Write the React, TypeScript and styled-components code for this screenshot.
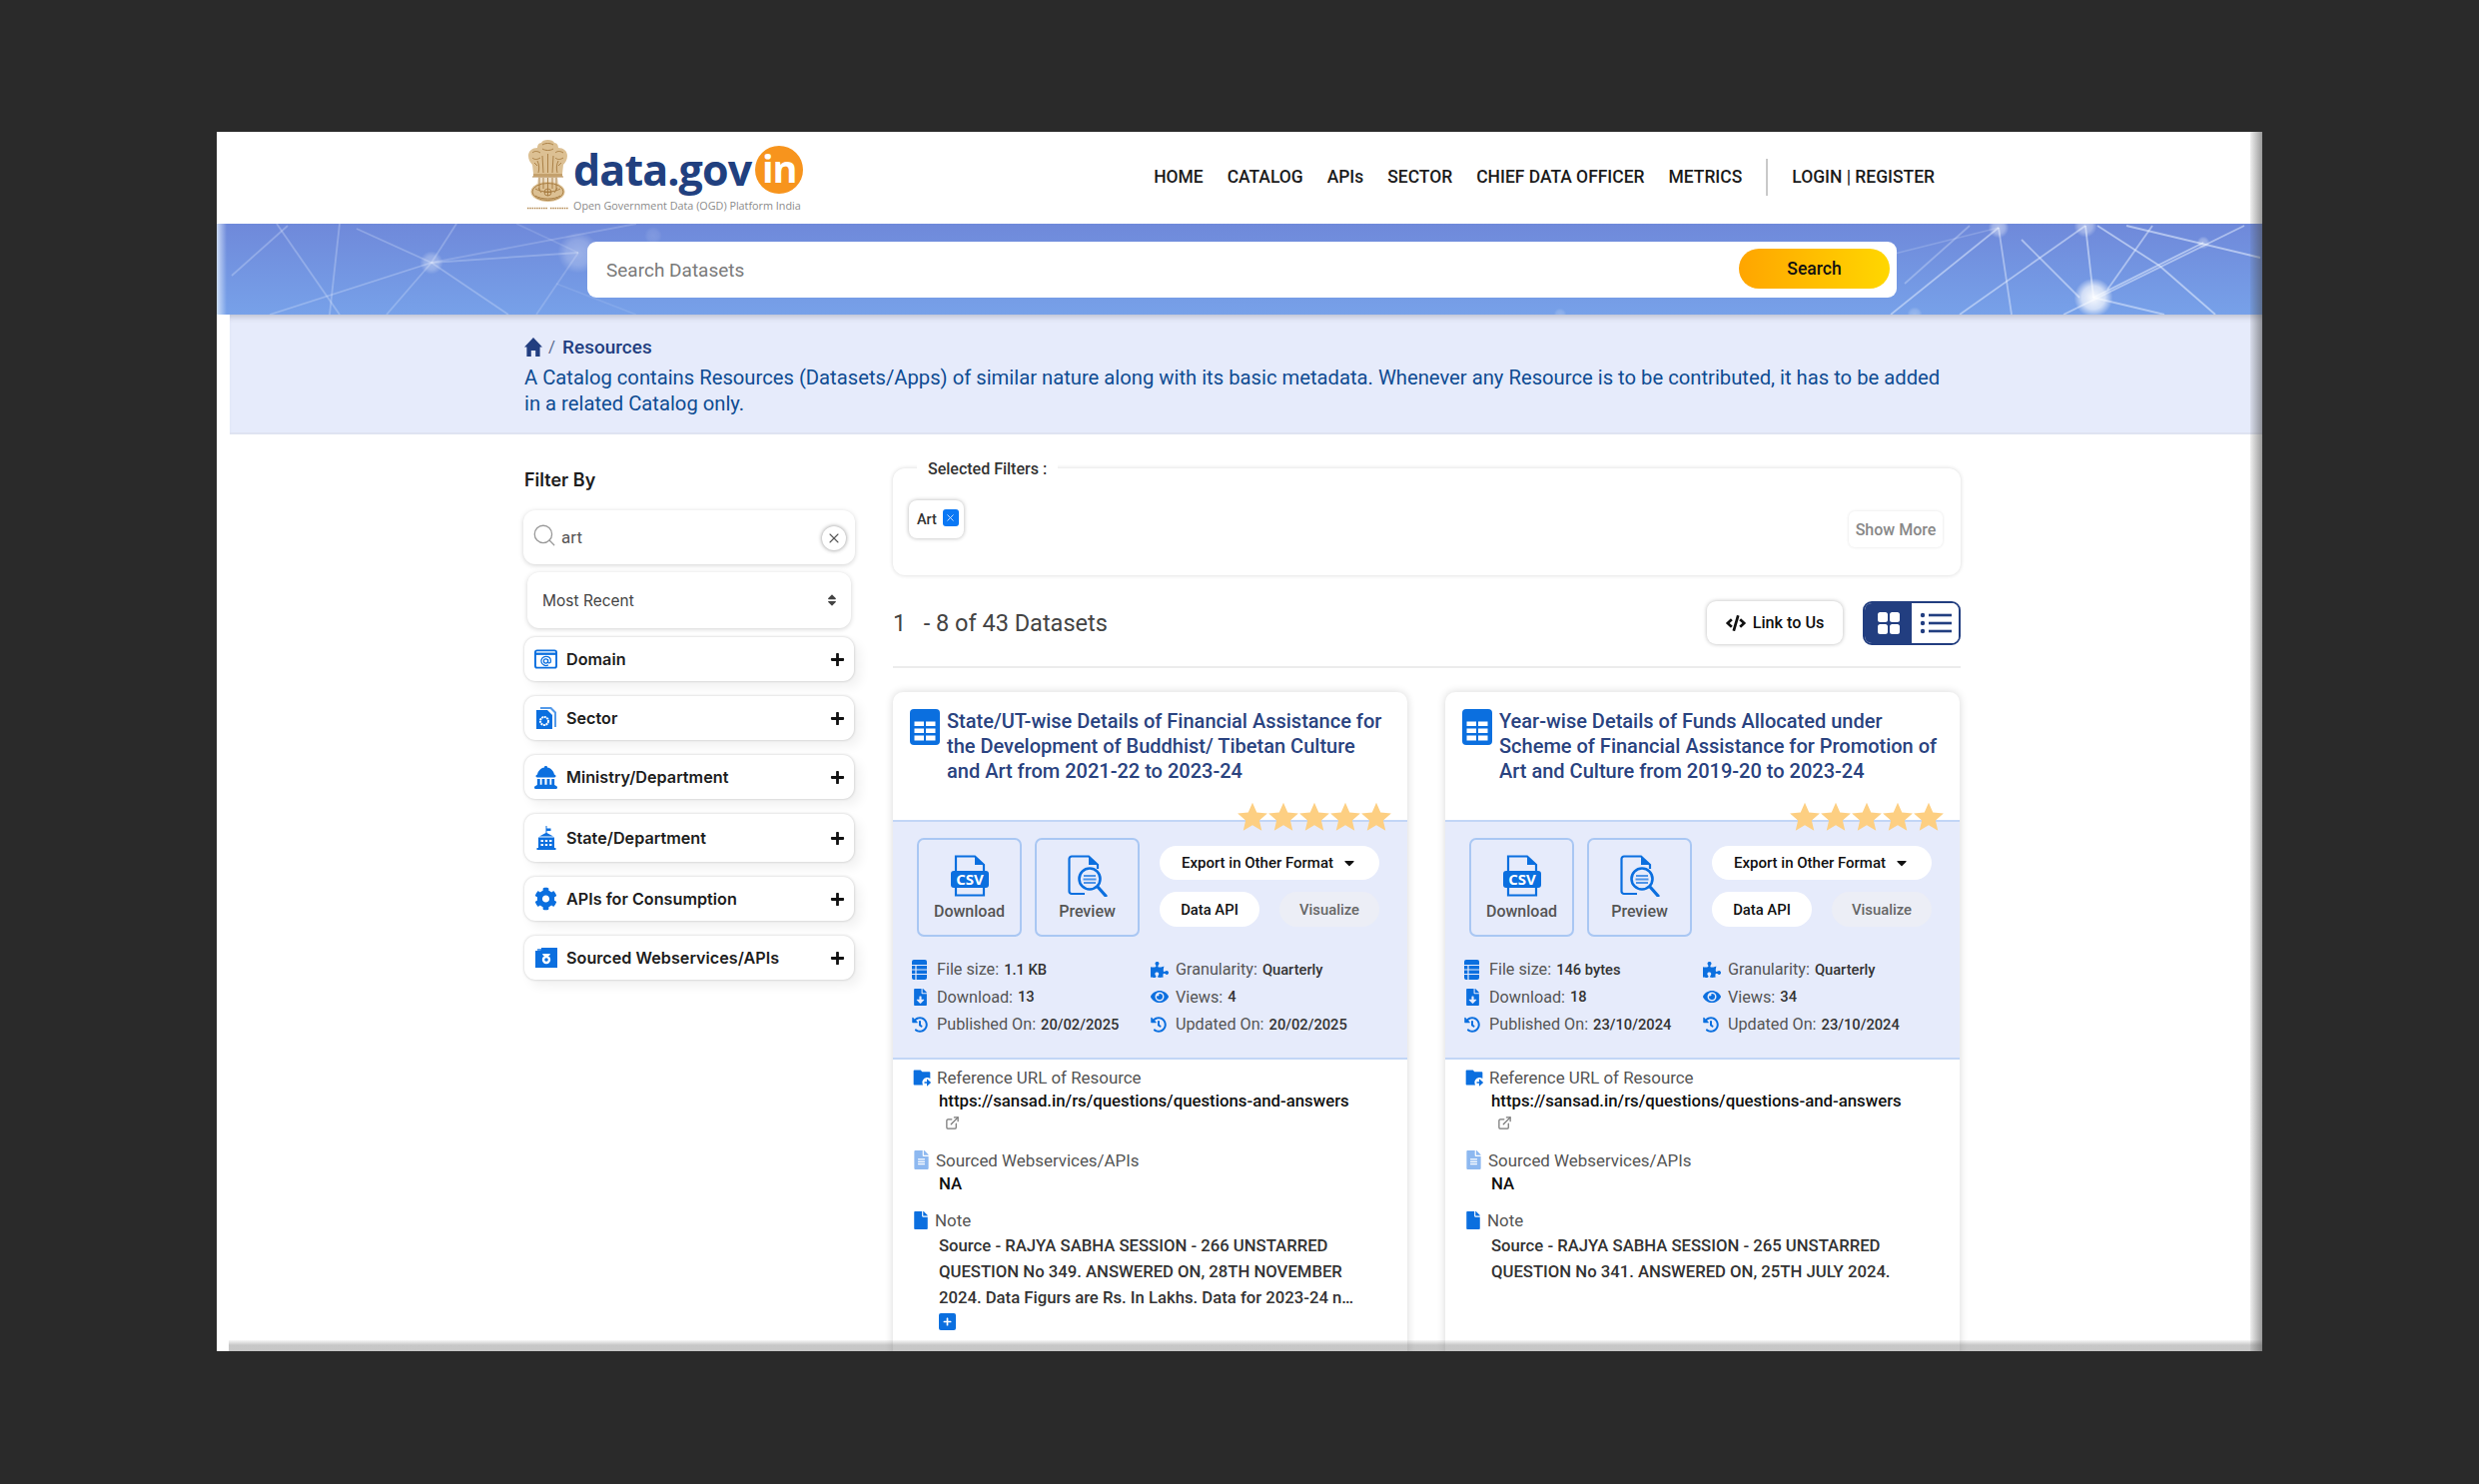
import React from 'react';
import styled, { createGlobalStyle } from 'styled-components';
import { FaCaretDown, FaPuzzlePiece, FaEye, FaHistory, FaFile, FaFileAlt, FaPlus, FaCode, FaSort, FaCog, FaFileDownload } from 'react-icons/fa';
import { FaLandmarkDome } from 'react-icons/fa6';
import { RiFolderSharedFill } from 'react-icons/ri';
import { Search, X, ExternalLink } from 'lucide-react';

const BLUE = '#0b6fdf';
const NAVY = '#223e80';

const GlobalStyle = createGlobalStyle`
  html, body { margin: 0; padding: 0; background: #2a2a2a; }
  * { box-sizing: border-box; }
`;

const Page = styled.div`
  width: 2482px;
  height: 1486px;
  padding: 132px 217px 133px;
  background: #2a2a2a;
  font-family: Roboto, 'Liberation Sans', sans-serif;
  overflow: hidden;
`;

const Screen = styled.div`
  position: relative;
  width: 2048px;
  height: 1221px;
  background: #fff;
  overflow: hidden;
  &::before {
    content: '';
    position: absolute;
    top: 0;
    right: 0;
    bottom: 0;
    width: 12px;
    background: linear-gradient(90deg, rgba(90, 90, 90, 0.1), rgba(70, 70, 70, 0.55));
    z-index: 5;
  }
  &::after {
    content: '';
    position: absolute;
    left: 12px;
    right: 0;
    bottom: 0;
    height: 11px;
    background: linear-gradient(180deg, rgba(90, 90, 90, 0.05), rgba(80, 80, 80, 0.32) 45%);
    z-index: 5;
  }
`;

const Header = styled.header`
  height: 92px;
  padding: 6px 328px 0 308px;
  display: flex;
  align-items: flex-start;
  justify-content: space-between;
`;

const Logo = styled.div`
  display: flex;
  margin-left: 2px;
`;

const LogoText = styled.div`
  margin-left: 4px;
  padding-top: 3px;
  display: flex;
  flex-direction: column;
`;

const LogoMain = styled.div`
  display: flex;
  align-items: center;
  height: 58px;
`;

const LogoWord = styled.span`
  font-family: 'Open Sans', sans-serif;
  font-weight: 700;
  font-size: 43px;
  letter-spacing: -0.9px;
  line-height: 50px;
  color: #21407f;
`;

const LogoBadge = styled.span`
  width: 48px;
  height: 48px;
  margin-left: 4px;
  border-radius: 50%;
  background: #f7941d;
  color: #fff;
  font-family: 'Open Sans', sans-serif;
  font-weight: 700;
  font-size: 38px;
  line-height: 44px;
  text-align: center;
  letter-spacing: -1px;
`;

const LogoSub = styled.span`
  font-family: 'Open Sans', sans-serif;
  font-size: 10.8px;
  color: #8b8b8b;
  line-height: 14px;
  white-space: nowrap;
`;

const Nav = styled.nav`
  height: 78px;
  display: flex;
  align-items: center;
  gap: 24px;
  font-size: 17.45px;
  font-weight: 500;
  color: #1b1b1b;
`;

const NavLink = styled.span`
  white-space: nowrap;
`;

const NavDivider = styled.span`
  width: 2px;
  height: 37px;
  background: #c9c9c9;
`;

const Banner = styled.div`
  position: relative;
  height: 91px;
  padding-left: 371px;
  display: flex;
  align-items: center;
  background: linear-gradient(90deg, rgba(235, 245, 255, 0.75), rgba(255, 255, 255, 0) 10px),
    linear-gradient(180deg, #6f89da, #77a1e9);
  overflow: hidden;
`;

const BannerArt = styled.svg`
  position: absolute;
  inset: 0;
  filter: blur(0.6px);
`;

const SearchBar = styled.div`
  position: relative;
  width: 1311px;
  height: 56px;
  padding: 2px 7px 0 19px;
  border-radius: 9px;
  background: #fff;
  display: flex;
  align-items: center;
  justify-content: space-between;
  color: #7a7a7a;
  font-size: 19px;
`;

const SearchButton = styled.span`
  width: 151px;
  height: 40px;
  margin-top: -4px;
  border-radius: 20px;
  background: linear-gradient(90deg, #ffa500, #ffd700);
  color: #111;
  font-size: 17.5px;
  font-weight: 500;
  line-height: 40px;
  text-align: center;
`;

const Intro = styled.section`
  margin-left: 13px;
  height: 120px;
  padding: 20px 0 0 295px;
  background: #e6ebfb;
  border-bottom: 2px solid #dfe3f1;
  box-shadow: inset 0 7px 6px -5px rgba(60, 60, 80, 0.28);
`;

const Crumb = styled.div`
  height: 24px;
  display: flex;
  align-items: center;
  color: ${NAVY};
  font-size: 19px;
  font-weight: 500;
`;

const CrumbSep = styled.span`
  margin: 0 7px 0 6px;
  font-weight: 400;
  font-size: 17px;
  color: #5a6a90;
`;

const IntroText = styled.p`
  margin: 6px 0 0;
  width: 1428px;
  font-size: 20.23px;
  line-height: 26px;
  color: #0f4c92;
`;

const Body = styled.div`
  display: flex;
  gap: 38px;
  padding: 34px 0 0 307px;
`;

const Sidebar = styled.aside`
  width: 332px;
  flex: none;
`;

const SideTitle = styled.h3`
  margin: 0 0 18px 1px;
  font-family: Inter, sans-serif;
  font-size: 18px;
  font-weight: 600;
  line-height: 24px;
  color: #1c1c1c;
`;

const SearchField = styled.div`
  height: 54px;
  padding: 0 9px 0 8px;
  border-radius: 12px;
  background: #fff;
  box-shadow: 0 1px 5px rgba(0, 0, 0, 0.18);
  display: flex;
  align-items: center;
  gap: 4px;
  font-size: 17px;
  color: #555;
`;

const SearchGlyph = styled(Search)`
  margin-top: -4px;
`;

const ClearButton = styled.span`
  margin: 2px 0 0 auto;
  width: 24px;
  height: 24px;
  border-radius: 50%;
  background: #fff;
  box-shadow: 0 0 4px rgba(0, 0, 0, 0.45);
  display: flex;
  align-items: center;
  justify-content: center;
  color: #555;
`;

const SortSelect = styled.div`
  width: 324px;
  height: 56px;
  margin: 8px 0 9px 4px;
  padding: 0 12px 0 15px;
  border-radius: 12px;
  background: #fff;
  box-shadow: 0 1px 5px rgba(0, 0, 0, 0.18);
  display: flex;
  align-items: center;
  justify-content: space-between;
  font-family: Inter, sans-serif;
  font-size: 15.5px;
  color: #444;
`;

const Accordion = styled.div`
  display: flex;
  flex-direction: column;
  gap: 15px;
`;

const AccordionRow = styled.div<{ $tall?: boolean }>`
  width: 330px;
  margin-left: 1px;
  height: ${({ $tall }) => ($tall ? 48 : 44)}px;
  padding: 0 9px 0 10px;
  border-radius: 11px;
  background: #fff;
  box-shadow: 0 0 3px rgba(0, 0, 0, 0.22), 6px 6px 12px rgba(0, 0, 0, 0.06);
  display: flex;
  align-items: center;
  font-family: Inter, sans-serif;
  font-size: 16.2px;
  font-weight: 600;
  color: #1d1d1d;
`;

const RowIcon = styled.span`
  width: 23px;
  height: 24px;
  margin-right: 9px;
  display: flex;
  align-items: center;
  justify-content: center;
  color: ${BLUE};
`;

const RowPlus = styled(FaPlus)`
  margin-left: auto;
  color: #111;
`;

const Main = styled.main`
  width: 1069px;
  flex: none;
`;

const FilterBox = styled.div`
  position: relative;
  height: 107px;
  border-radius: 12px;
  background: #fff;
  box-shadow: 0 0 4px rgba(0, 0, 0, 0.16);
  display: flex;
  align-items: flex-start;
  justify-content: space-between;
  padding: 32px 18px 0 16px;
`;

const FilterLegend = styled.span`
  position: absolute;
  top: -9px;
  left: 24px;
  padding: 0 11px;
  background: #fff;
  font-size: 16px;
  font-weight: 500;
  color: #333;
`;

const Chip = styled.span`
  width: 55px;
  height: 38px;
  padding-left: 8px;
  border-radius: 8px;
  background: #fff;
  box-shadow: 0 0 4px rgba(0, 0, 0, 0.3);
  display: flex;
  align-items: center;
  gap: 6px;
  font-size: 14.5px;
  font-weight: 500;
  color: #333;
`;

const ChipClose = styled.span`
  width: 16px;
  height: 17px;
  margin-top: -3px;
  border-radius: 3px;
  background: #0a78f5;
  color: #d6e8ff;
  display: flex;
  align-items: center;
  justify-content: center;
`;

const ShowMore = styled.span`
  width: 94px;
  height: 36px;
  margin-top: 11px;
  border-radius: 6px;
  box-shadow: 0 0 3px rgba(0, 0, 0, 0.12);
  font-size: 16px;
  font-weight: 500;
  line-height: 37px;
  text-align: center;
  color: #888;
`;

const ResultRow = styled.div`
  height: 93px;
  padding: 26px 0 0;
  border-bottom: 2px solid #ececec;
  display: flex;
  align-items: flex-start;
`;

const ResultCount = styled.span`
  margin-top: 8px;
  font-size: 23.5px;
  color: #444;
  white-space: pre;
`;

const LinkButton = styled.span`
  margin-left: auto;
  width: 136px;
  height: 43px;
  border-radius: 9px;
  background: #fff;
  box-shadow: 0 0 4px rgba(0, 0, 0, 0.28);
  display: flex;
  align-items: center;
  justify-content: center;
  gap: 7px;
  font-size: 16.2px;
  font-weight: 500;
  color: #111;
`;

const ViewToggle = styled.div`
  width: 98px;
  height: 44px;
  margin-left: 20px;
  border: 2px solid ${NAVY};
  border-radius: 9px;
  overflow: hidden;
  display: flex;
`;

const ViewOption = styled.span<{ $active?: boolean }>`
  flex: 1;
  display: flex;
  align-items: center;
  justify-content: center;
  background: ${({ $active }) => ($active ? NAVY : '#fff')};
`;

const CardGrid = styled.div`
  display: grid;
  grid-template-columns: 515px 515px;
  column-gap: 38px;
  margin-top: 24px;
`;

const Card = styled.article`
  position: relative;
  min-height: 720px;
  border-radius: 10px 10px 0 0;
  background: #fff;
  box-shadow: 0 0 9px rgba(0, 0, 0, 0.16);
`;

const CardHead = styled.div`
  height: 128px;
  padding: 17px 17px 0 17px;
  display: flex;
  gap: 7px;
`;

const TitleIcon = styled.span`
  flex: none;
  width: 30px;
  height: 36px;
`;

const CardTitle = styled.h4`
  margin: 0;
  font-size: 20px;
  font-weight: 500;
  line-height: 25px;
  color: #2a437f;
`;

const Stars = styled.div`
  position: absolute;
  top: 110px;
  right: 16px;
  display: flex;
  gap: 1px;
`;

const CardBand = styled.div`
  padding: 16px 0 19px 19px;
  background: #e6ebfb;
  border-top: 2px solid #c2d6f6;
  border-bottom: 2px solid #c2d6f6;
`;

const ActionRow = styled.div`
  display: flex;
  margin-left: 5px;
`;

const ActionBox = styled.div`
  width: 105px;
  height: 99px;
  margin-right: 13px;
  padding-top: 15px;
  border: 2px solid #a9c7f3;
  border-radius: 7px;
  display: flex;
  flex-direction: column;
  align-items: center;
  font-size: 16px;
  font-weight: 500;
  color: #555;
`;

const ActionLabel = styled.span`
  margin-top: 5px;
`;

const PillColumn = styled.div`
  margin: 8px 0 0 7px;
  width: 220px;
  display: flex;
  flex-direction: column;
  gap: 12px;
`;

const PillRow = styled.div`
  display: flex;
  justify-content: space-between;
`;

const Pill = styled.span<{ $muted?: boolean; $wide?: boolean }>`
  width: ${({ $wide }) => ($wide ? '220px' : '100px')};
  height: ${({ $wide }) => ($wide ? 34 : 35)}px;
  border-radius: 18px;
  background: ${({ $muted }) => ($muted ? '#eceef6' : '#fff')};
  color: ${({ $muted }) => ($muted ? '#666' : '#111')};
  display: flex;
  align-items: center;
  justify-content: center;
  gap: 8px;
  font-size: ${({ $wide }) => ($wide ? 15 : 14.8)}px;
  font-weight: 500;
`;

const MetaGrid = styled.div`
  display: grid;
  grid-template-columns: 239px 1fr;
  margin-top: 19px;
`;

const MetaItem = styled.div`
  height: 27.5px;
  display: flex;
  align-items: center;
  font-size: 16.2px;
  color: #555;
  white-space: nowrap;
`;

const MetaIcon = styled.span`
  width: 25px;
  display: flex;
  justify-content: flex-start;
  color: ${BLUE};
`;

const MetaValue = styled.b`
  margin-left: 5px;
  font-size: 14.7px;
  font-weight: 500;
  color: #333;
`;

const CardInfo = styled.div`
  padding: 7px 14px 0 19px;
`;

const InfoLabel = styled.div<{ $gap: number }>`
  height: 22px;
  margin-top: ${({ $gap }) => $gap}px;
  display: flex;
  align-items: center;
  gap: 5px;
  font-size: 16.9px;
  color: #555;
`;

const InfoValue = styled.div`
  height: 24px;
  margin-left: 27px;
  line-height: 24px;
  font-size: 16.8px;
  font-weight: 500;
  color: #111;
  white-space: nowrap;
`;

const NoteLines = styled.div`
  margin: 2px 0 0 27px;
  font-size: 16.7px;
  font-weight: 500;
  line-height: 26px;
  color: #333;
  white-space: nowrap;
`;

const ExpandButton = styled.span`
  margin: 2px 0 0 27px;
  width: 17px;
  height: 17px;
  border-radius: 2px;
  background: ${BLUE};
  color: #fff;
  display: flex;
  align-items: center;
  justify-content: center;
`;

const NetworkLines: [number, number, number, number, number][] = [
  [123, 0, 113, 91, 0.28], [60, 0, 123, 91, 0.28], [15, 52, 71, 2, 0.28], [53, 91, 215, 39, 0.28], [140, 5, 215, 39, 0.25],
  [215, 39, 292, 91, 0.28], [215, 39, 362, 29, 0.25], [215, 39, 420, 0, 0.2], [320, 91, 362, 29, 0.2], [215, 39, 170, 91, 0.25],
  [240, 0, 215, 39, 0.25], [362, 29, 300, 0, 0.15], [420, 91, 340, 60, 0.12],
  [1676, 91, 1784, 4, 0.5], [1784, 4, 1797, 91, 0.45], [1745, 91, 1871, 2, 0.5], [1755, 2, 1690, 60, 0.3], [1807, 16, 1865, 74, 0.5],
  [1871, 2, 1879, 74, 0.55], [1879, 74, 1989, 19, 0.55], [1879, 74, 1950, 91, 0.5], [1883, 2, 1945, 42, 0.55], [1945, 42, 2001, 91, 0.55],
  [1912, 2, 2046, 34, 0.55], [1938, 2, 1893, 66, 0.5], [2030, 2, 1849, 91, 0.5], [1680, 30, 1784, 4, 0.2],
];

const NetworkNodes: [number, number, number, number][] = [
  [215, 39, 9, 0.35], [362, 29, 16, 0.3], [1879, 74, 15, 0.95], [1784, 4, 8, 0.45], [1871, 2, 9, 0.45], [1989, 19, 5, 0.35],
  [437, 12, 7, 0.12], [1700, 91, 6, 0.25], [1345, 91, 5, 0.2],
];

const BannerNetwork = () => (
  <BannerArt width="2048" height="91" viewBox="0 0 2048 91">
    <defs>
      <radialGradient id="glow">
        <stop offset="0%" stopColor="#fff" stopOpacity="1" />
        <stop offset="60%" stopColor="#fff" stopOpacity="0.7" />
        <stop offset="100%" stopColor="#fff" stopOpacity="0" />
      </radialGradient>
    </defs>
    <g stroke="#eaf2ff" strokeWidth="1.8">
      {NetworkLines.map(([x1, y1, x2, y2, o], i) => (
        <line key={i} x1={x1} y1={y1} x2={x2} y2={y2} strokeOpacity={o} />
      ))}
    </g>
    {NetworkNodes.map(([cx, cy, r, o], i) => (
      <circle key={i} cx={cx} cy={cy} r={r * 1.3} fill="url(#glow)" opacity={o} />
    ))}
  </BannerArt>
);

const Emblem = () => (
  <svg width="43" height="75" viewBox="0 0 43 75">
    <g fill="#dcc093">
      <path d="M15 5c1-4 12-4 13 0 3 0 4 3 4 5 5 0 9 3 9 8 0 4-2 7-4 9l-1 9H7l-1-9c-2-2-4-5-4-9 0-5 4-8 9-8 0-2 1-5 4-5z" />
      <rect x="7" y="36" width="29" height="3" />
      <path d="M12 39h19l4 20H8z" opacity="0.5" />
      <ellipse cx="21.500" cy="54" rx="17" ry="10" />
    </g>
    <g fill="none" stroke="#a67a40" strokeWidth="0.9">
      <path d="M16 7c3-2 8-2 11 0M16 11c3 2 8 2 11 0M6 15c2-2 5-2 8 0M29 15c2-2 5-2 8 0M6 20c2 2 5 2 8 0M29 20c2 2 5 2 8 0" />
      <path d="M11 23c2 4 2 8 1 12M32 23c-2 4-2 8-1 12M21.500 16v19M16 18l1 17M27 18l-1 17M8 25l3 3M35 25l-3 3" />
      <path d="M13 40v12M17 40v11M21.500 40v11M26 40v11M30 40v12" />
      <path d="M7 37h29M6 39h31" />
      <ellipse cx="21.500" cy="54" rx="15.500" ry="8.500" />
      <path d="M9 51c6 4 19 4 25 0M9 58c6 4 19 4 25 0" />
      <circle cx="21.500" cy="54.500" r="3.500" />
      <path d="M21.500 51v7M18 54.500h7M12 50l3 5M31 50l-3 5" />
    </g>
    <g stroke="#b58c55" strokeWidth="1.6" strokeDasharray="1.500 0.800">
      <line x1="1" y1="70.500" x2="21" y2="70.500" />
      <line x1="24" y1="70.500" x2="42" y2="70.500" />
    </g>
  </svg>
);

const HomeIcon = () => (
  <svg width="18" height="19" viewBox="0 0 18 19" fill={NAVY}>
    <path d="M9 0l9 9.500h-2.400V19h-4.400v-6H6.800v6H2.400V9.500H0z" />
  </svg>
);

const TableIcon = () => (
  <svg width="30" height="36" viewBox="0 0 30 36">
    <rect width="30" height="36" rx="4" fill={BLUE} />
    <g fill="#fff">
      <rect x="4.500" y="12.500" width="9.500" height="4.500" />
      <rect x="16" y="12.500" width="9.500" height="4.500" />
      <rect x="4.500" y="19.500" width="9.500" height="4.500" />
      <rect x="16" y="19.500" width="9.500" height="4.500" />
      <rect x="4.500" y="26.500" width="9.500" height="5" />
      <rect x="16" y="26.500" width="9.500" height="5" />
    </g>
  </svg>
);

const SizeIcon = () => (
  <svg width="15" height="20" viewBox="0 0 15 20">
    <path d="M2 0h11a2 2 0 0 1 2 2v16a2 2 0 0 1-2 2H2a2 2 0 0 1-2-2V2a2 2 0 0 1 2-2z" fill={BLUE} />
    <path d="M0 5.500h15M0 10h15M0 14.500h15M4 5.500V20" stroke="#e6ebfb" strokeWidth="1.200" />
  </svg>
);

const DomainIcon = () => (
  <svg width="24" height="20" viewBox="0 0 24 20" fill="none" stroke={BLUE}>
    <rect x="1" y="1" width="22" height="18" rx="2" strokeWidth="2" />
    <path d="M1 4.500h22" strokeWidth="2.400" />
    <circle cx="12" cy="12" r="2.200" strokeWidth="1.300" />
    <path d="M14.200 10v3c0 1.600 3 1.600 3-1 0-3-2.300-4.800-5.200-4.800a4.800 4.800 0 1 0 2.500 8.900" strokeWidth="1.300" />
  </svg>
);

const SectorIcon = () => (
  <svg width="21" height="22" viewBox="0 0 21 22">
    <path d="M5 0h11l5 5v15h-2V6l-4-4H5z" fill={BLUE} opacity="0.7" />
    <path d="M1 3h11l5 5v14H1z" fill={BLUE} />
    <circle cx="9" cy="14" r="4" fill="none" stroke="#fff" strokeWidth="2" strokeDasharray="2 0.6" />
  </svg>
);

const StateIcon = () => (
  <svg width="20" height="24" viewBox="0 0 20 24" fill={BLUE}>
    <path d="M9.500 0h1v2.500h4v2.500h-4V7L17 10.500H3L9.500 7z" />
    <path d="M2 11.500h16V22h1.500v2H.5v-2H2zM4.500 14v2h2.500v-2zm4.300 0v2h2.400v-2zm4.200 0v2h2.500v-2zM4.500 18v2h2.500v-2zm4.300 0v2h2.400v-2zm4.200 0v2h2.500v-2z" fillRule="evenodd" />
  </svg>
);

const SourcedIcon = () => (
  <svg width="22" height="20" viewBox="0 0 22 20">
    <path d="M0 3h5l1-1v-2h16v20H0z" fill={BLUE} />
    <path d="M2 1h7v2H2z" fill={BLUE} opacity="0.7" />
    <circle cx="11" cy="12" r="4.200" fill="#fff" />
    <circle cx="11" cy="12" r="1.800" fill={BLUE} />
    <path d="M7 6h8l-1 2H8z" fill="#fff" />
  </svg>
);

const GridIcon = () => (
  <svg width="24" height="24" viewBox="0 0 24 24" fill="#fff">
    <rect x="1" y="1" width="10" height="10" rx="2.500" />
    <rect x="13" y="1" width="10" height="10" rx="2.500" />
    <rect x="1" y="13" width="10" height="10" rx="2.500" />
    <rect x="13" y="13" width="10" height="10" rx="2.500" />
  </svg>
);

const ListIcon = () => (
  <svg width="32" height="24" viewBox="0 0 32 24" fill={NAVY}>
    <circle cx="3" cy="4" r="2.200" />
    <circle cx="3" cy="12" r="2.200" />
    <circle cx="3" cy="20" r="2.200" />
    <rect x="9" y="2.700" width="23" height="2.600" />
    <rect x="9" y="10.700" width="23" height="2.600" />
    <rect x="9" y="18.700" width="23" height="2.600" />
  </svg>
);

const CsvIcon = () => (
  <svg width="38" height="42" viewBox="0 0 38 42">
    <path d="M5 17V1.500h19L33 10v7M33 32v8.500H5V32" fill="none" stroke={BLUE} strokeWidth="2.200" />
    <path d="M24 1.500V10h9z" fill={BLUE} />
    <rect x="0" y="16" width="38" height="17" rx="3" fill={BLUE} />
    <text x="19" y="30" textAnchor="middle" fontFamily="'Open Sans', sans-serif" fontWeight="700" fontSize="15" fill="#fff">CSV</text>
  </svg>
);

const PreviewIcon = () => (
  <svg width="40" height="42" viewBox="0 0 40 42" fill="none" stroke={BLUE}>
    <path d="M17 39H4a2.500 2.500 0 0 1-2.500-2.500V4A2.500 2.500 0 0 1 4 1.500h17L30 10v4" strokeWidth="2.200" />
    <path d="M21 1.500V10h9z" fill={BLUE} stroke="none" />
    <circle cx="22" cy="24" r="10.500" strokeWidth="2.600" />
    <path d="M30 32l8 9" strokeWidth="3.200" strokeLinecap="round" />
    <path d="M16 21h12M15.500 24.500h13M16 28h12" strokeWidth="1.800" opacity="0.7" />
  </svg>
);

const StarIcon = () => (
  <svg width="30" height="30" viewBox="0 0 24 24" fill="#fdcf82">
    <path d="M12 .5l3.400 7.800 8.500.8-6.400 5.600 1.900 8.300L12 18.600 4.600 23l1.900-8.300L.1 9.100l8.500-.8z" />
  </svg>
);

const filters = [
  { label: 'Domain', icon: <DomainIcon /> },
  { label: 'Sector', icon: <SectorIcon /> },
  { label: 'Ministry/Department', icon: <FaLandmarkDome size={23} /> },
  { label: 'State/Department', icon: <StateIcon />, tall: true },
  { label: 'APIs for Consumption', icon: <FaCog size={24} /> },
  { label: 'Sourced Webservices/APIs', icon: <SourcedIcon /> },
];

const datasets = [
  {
    title: 'State/UT-wise Details of Financial Assistance for the Development of Buddhist/ Tibetan Culture and Art from 2021-22 to 2023-24',
    size: '1.1 KB',
    downloads: '13',
    views: '4',
    published: '20/02/2025',
    updated: '20/02/2025',
    note: [
      'Source - RAJYA SABHA SESSION - 266 UNSTARRED',
      'QUESTION No 349. ANSWERED ON, 28TH NOVEMBER',
      '2024. Data Figurs are Rs. In Lakhs. Data for 2023-24 n…',
    ],
    more: true,
  },
  {
    title: 'Year-wise Details of Funds Allocated under Scheme of Financial Assistance for Promotion of Art and Culture from 2019-20 to 2023-24',
    size: '146 bytes',
    downloads: '18',
    views: '34',
    published: '23/10/2024',
    updated: '23/10/2024',
    note: [
      'Source - RAJYA SABHA SESSION - 265 UNSTARRED',
      'QUESTION No 341. ANSWERED ON, 25TH JULY 2024.',
    ],
    more: false,
  },
];

type Dataset = (typeof datasets)[number];

const DatasetCard: React.FC<{ data: Dataset }> = ({ data }) => (
  <Card>
    <CardHead>
      <TitleIcon>
        <TableIcon />
      </TitleIcon>
      <CardTitle>{data.title}</CardTitle>
    </CardHead>
    <Stars>
      {[0, 1, 2, 3, 4].map((i) => (
        <StarIcon key={i} />
      ))}
    </Stars>
    <CardBand>
      <ActionRow>
        <ActionBox>
          <CsvIcon />
          <ActionLabel>Download</ActionLabel>
        </ActionBox>
        <ActionBox>
          <PreviewIcon />
          <ActionLabel>Preview</ActionLabel>
        </ActionBox>
        <PillColumn>
          <Pill $wide>
            Export in Other Format <FaCaretDown size={16} />
          </Pill>
          <PillRow>
            <Pill>Data API</Pill>
            <Pill $muted>Visualize</Pill>
          </PillRow>
        </PillColumn>
      </ActionRow>
      <MetaGrid>
        <MetaItem>
          <MetaIcon><SizeIcon /></MetaIcon>File size: <MetaValue>{data.size}</MetaValue>
        </MetaItem>
        <MetaItem>
          <MetaIcon><FaPuzzlePiece size={18} /></MetaIcon>Granularity: <MetaValue>Quarterly</MetaValue>
        </MetaItem>
        <MetaItem>
          <MetaIcon><FaFileDownload size={17} /></MetaIcon>Download: <MetaValue>{data.downloads}</MetaValue>
        </MetaItem>
        <MetaItem>
          <MetaIcon><FaEye size={18} /></MetaIcon>Views: <MetaValue>{data.views}</MetaValue>
        </MetaItem>
        <MetaItem>
          <MetaIcon><FaHistory size={16} /></MetaIcon>Published On: <MetaValue>{data.published}</MetaValue>
        </MetaItem>
        <MetaItem>
          <MetaIcon><FaHistory size={16} /></MetaIcon>Updated On: <MetaValue>{data.updated}</MetaValue>
        </MetaItem>
      </MetaGrid>
    </CardBand>
    <CardInfo>
      <InfoLabel $gap={0}>
        <RiFolderSharedFill size={20} color={BLUE} />
        Reference URL of Resource
      </InfoLabel>
      <InfoValue>https://sansad.in/rs/questions/questions-and-answers</InfoValue>
      <InfoValue>
        <ExternalLink size={15} color="#777" style={{ marginLeft: 6 }} />
      </InfoValue>
      <InfoLabel $gap={13}>
        <FaFileAlt size={19} color="#8db8f0" />
        Sourced Webservices/APIs
      </InfoLabel>
      <InfoValue>NA</InfoValue>
      <InfoLabel $gap={14}>
        <FaFile size={18} color={BLUE} />
        Note
      </InfoLabel>
      <NoteLines>
        {data.note.map((line) => (
          <div key={line}>{line}</div>
        ))}
      </NoteLines>
      {data.more && (
        <ExpandButton>
          <FaPlus size={9} />
        </ExpandButton>
      )}
    </CardInfo>
  </Card>
);

const App: React.FC = () => (
  <Page>
    <GlobalStyle />
    <Screen>
      <Header>
        <Logo>
          <Emblem />
          <LogoText>
            <LogoMain>
              <LogoWord>data.gov</LogoWord>
              <LogoBadge>in</LogoBadge>
            </LogoMain>
            <LogoSub>Open Government Data (OGD) Platform India</LogoSub>
          </LogoText>
        </Logo>
        <Nav>
          <NavLink>HOME</NavLink>
          <NavLink>CATALOG</NavLink>
          <NavLink>APIs</NavLink>
          <NavLink>SECTOR</NavLink>
          <NavLink>CHIEF DATA OFFICER</NavLink>
          <NavLink>METRICS</NavLink>
          <NavDivider />
          <NavLink>LOGIN | REGISTER</NavLink>
        </Nav>
      </Header>
      <Banner>
        <BannerNetwork />
        <SearchBar>
          Search Datasets
          <SearchButton>Search</SearchButton>
        </SearchBar>
      </Banner>
      <Intro>
        <Crumb>
          <HomeIcon />
          <CrumbSep>/</CrumbSep>
          Resources
        </Crumb>
        <IntroText>
          A Catalog contains Resources (Datasets/Apps) of similar nature along with its basic metadata. Whenever any Resource is to be contributed, it has to be added in a related Catalog only.
        </IntroText>
      </Intro>
      <Body>
        <Sidebar>
          <SideTitle>Filter By</SideTitle>
          <SearchField>
            <SearchGlyph size={26} color="#999" strokeWidth={1.2} />
            art
            <ClearButton>
              <X size={16} strokeWidth={1.6} />
            </ClearButton>
          </SearchField>
          <SortSelect>
            Most Recent
            <FaSort size={14} color="#444" />
          </SortSelect>
          <Accordion>
            {filters.map((f) => (
              <AccordionRow key={f.label} $tall={f.tall}>
                <RowIcon>{f.icon}</RowIcon>
                {f.label}
                <RowPlus size={15} />
              </AccordionRow>
            ))}
          </Accordion>
        </Sidebar>
        <Main>
          <FilterBox>
            <FilterLegend>Selected Filters :</FilterLegend>
            <Chip>
              Art
              <ChipClose>
                <X size={11} strokeWidth={2} />
              </ChipClose>
            </Chip>
            <ShowMore>Show More</ShowMore>
          </FilterBox>
          <ResultRow>
            <ResultCount>{'1   - 8 of 43 Datasets'}</ResultCount>
            <LinkButton>
              <FaCode size={20} />
              Link to Us
            </LinkButton>
            <ViewToggle>
              <ViewOption $active>
                <GridIcon />
              </ViewOption>
              <ViewOption>
                <ListIcon />
              </ViewOption>
            </ViewToggle>
          </ResultRow>
          <CardGrid>
            {datasets.map((d) => (
              <DatasetCard key={d.title} data={d} />
            ))}
          </CardGrid>
        </Main>
      </Body>
    </Screen>
  </Page>
);

export default App;
